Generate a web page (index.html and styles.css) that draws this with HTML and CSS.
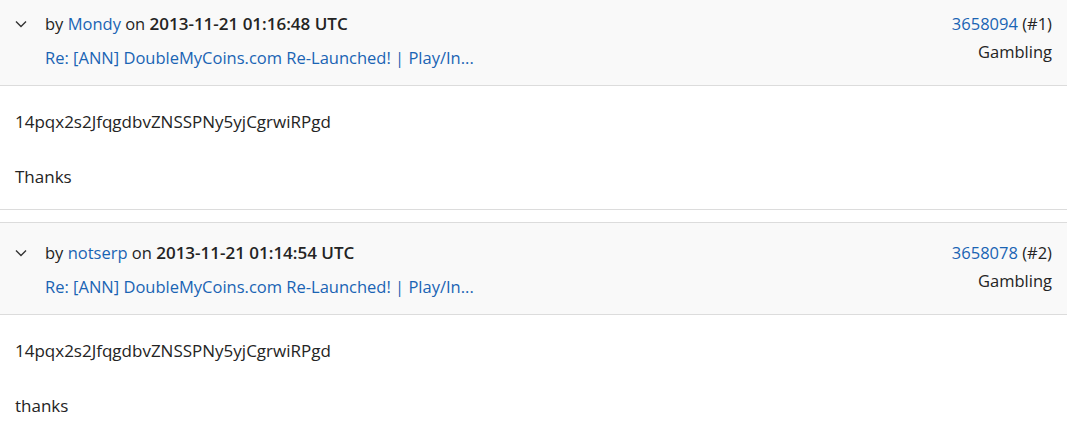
FILE: index.html
```html
<!DOCTYPE html>
<html>
<head>
<meta charset="utf-8">
<link rel="stylesheet" href="styles.css">
</head>
<body>
<div class="list">
  <div class="post">
    <div class="head">
      <div class="left">
        <div class="line1">
          <svg class="chev" width="12" height="8" viewBox="0 0 12 8"><path d="M1 1.5 L6 6.5 L11 1.5" fill="none" stroke="#333" stroke-width="1.4"/></svg>
          <span>by <a href="#">Mondy</a> on <b>2013-11-21 01:16:48 UTC</b></span>
        </div>
        <div class="line2"><a href="#">Re: [ANN] DoubleMyCoins.com Re-Launched! | Play/In...</a></div>
      </div>
      <div class="right">
        <div><a href="#">3658094</a> (#1)</div>
        <div class="cat">Gambling</div>
      </div>
    </div>
    <div class="body">
      <p>14pqx2s2JfqgdbvZNSSPNy5yjCgrwiRPgd</p>
      <p>Thanks</p>
    </div>
  </div>
  <div class="post">
    <div class="head">
      <div class="left">
        <div class="line1">
          <svg class="chev" width="12" height="8" viewBox="0 0 12 8"><path d="M1 1.5 L6 6.5 L11 1.5" fill="none" stroke="#333" stroke-width="1.4"/></svg>
          <span>by <a href="#">notserp</a> on <b>2013-11-21 01:14:54 UTC</b></span>
        </div>
        <div class="line2"><a href="#">Re: [ANN] DoubleMyCoins.com Re-Launched! | Play/In...</a></div>
      </div>
      <div class="right">
        <div><a href="#">3658078</a> (#2)</div>
        <div class="cat">Gambling</div>
      </div>
    </div>
    <div class="body">
      <p>14pqx2s2JfqgdbvZNSSPNy5yjCgrwiRPgd</p>
      <p>thanks</p>
    </div>
  </div>
</div>
</body>
</html>
```
FILE: styles.css
```css
html, body {
  margin: 0;
  padding: 0;
  background: #fff;
}
body {
  font-family: "Open Sans", "Noto Sans", "Liberation Sans", sans-serif;
  color: #242424;
  overflow: hidden;
}
a {
  color: #1a64b4;
  text-decoration: none;
}
.list {
  margin-top: -7px;
  display: flex;
  flex-direction: column;
  gap: 12px;
}
.post {
  border-top: 1px solid #dcdcdc;
  border-bottom: 1px solid #dcdcdc;
}
.head {
  background: #f9f9f9;
  border-bottom: 1px solid #dcdcdc;
  display: flex;
  justify-content: space-between;
  padding: 18px 15px 15px 15px;
}
.line1 {
  display: flex;
  align-items: center;
  gap: 18px;
  font-size: 16.5px;
  line-height: 24px;
}
.line1 b {
  font-weight: 600;
  font-size: 17px;
}
.line2 {
  margin-top: 10px;
  padding-left: 30px;
  font-size: 16.5px;
  line-height: 24px;
}
.right {
  text-align: right;
  font-size: 16.5px;
  line-height: 24px;
}
.cat {
  margin-top: 4px;
}
.body {
  padding: 24px 15px 20px 15px;
  font-size: 17px;
  line-height: 24px;
}
.body p {
  margin: 0;
}
.body p + p {
  margin-top: 31px;
}
```
